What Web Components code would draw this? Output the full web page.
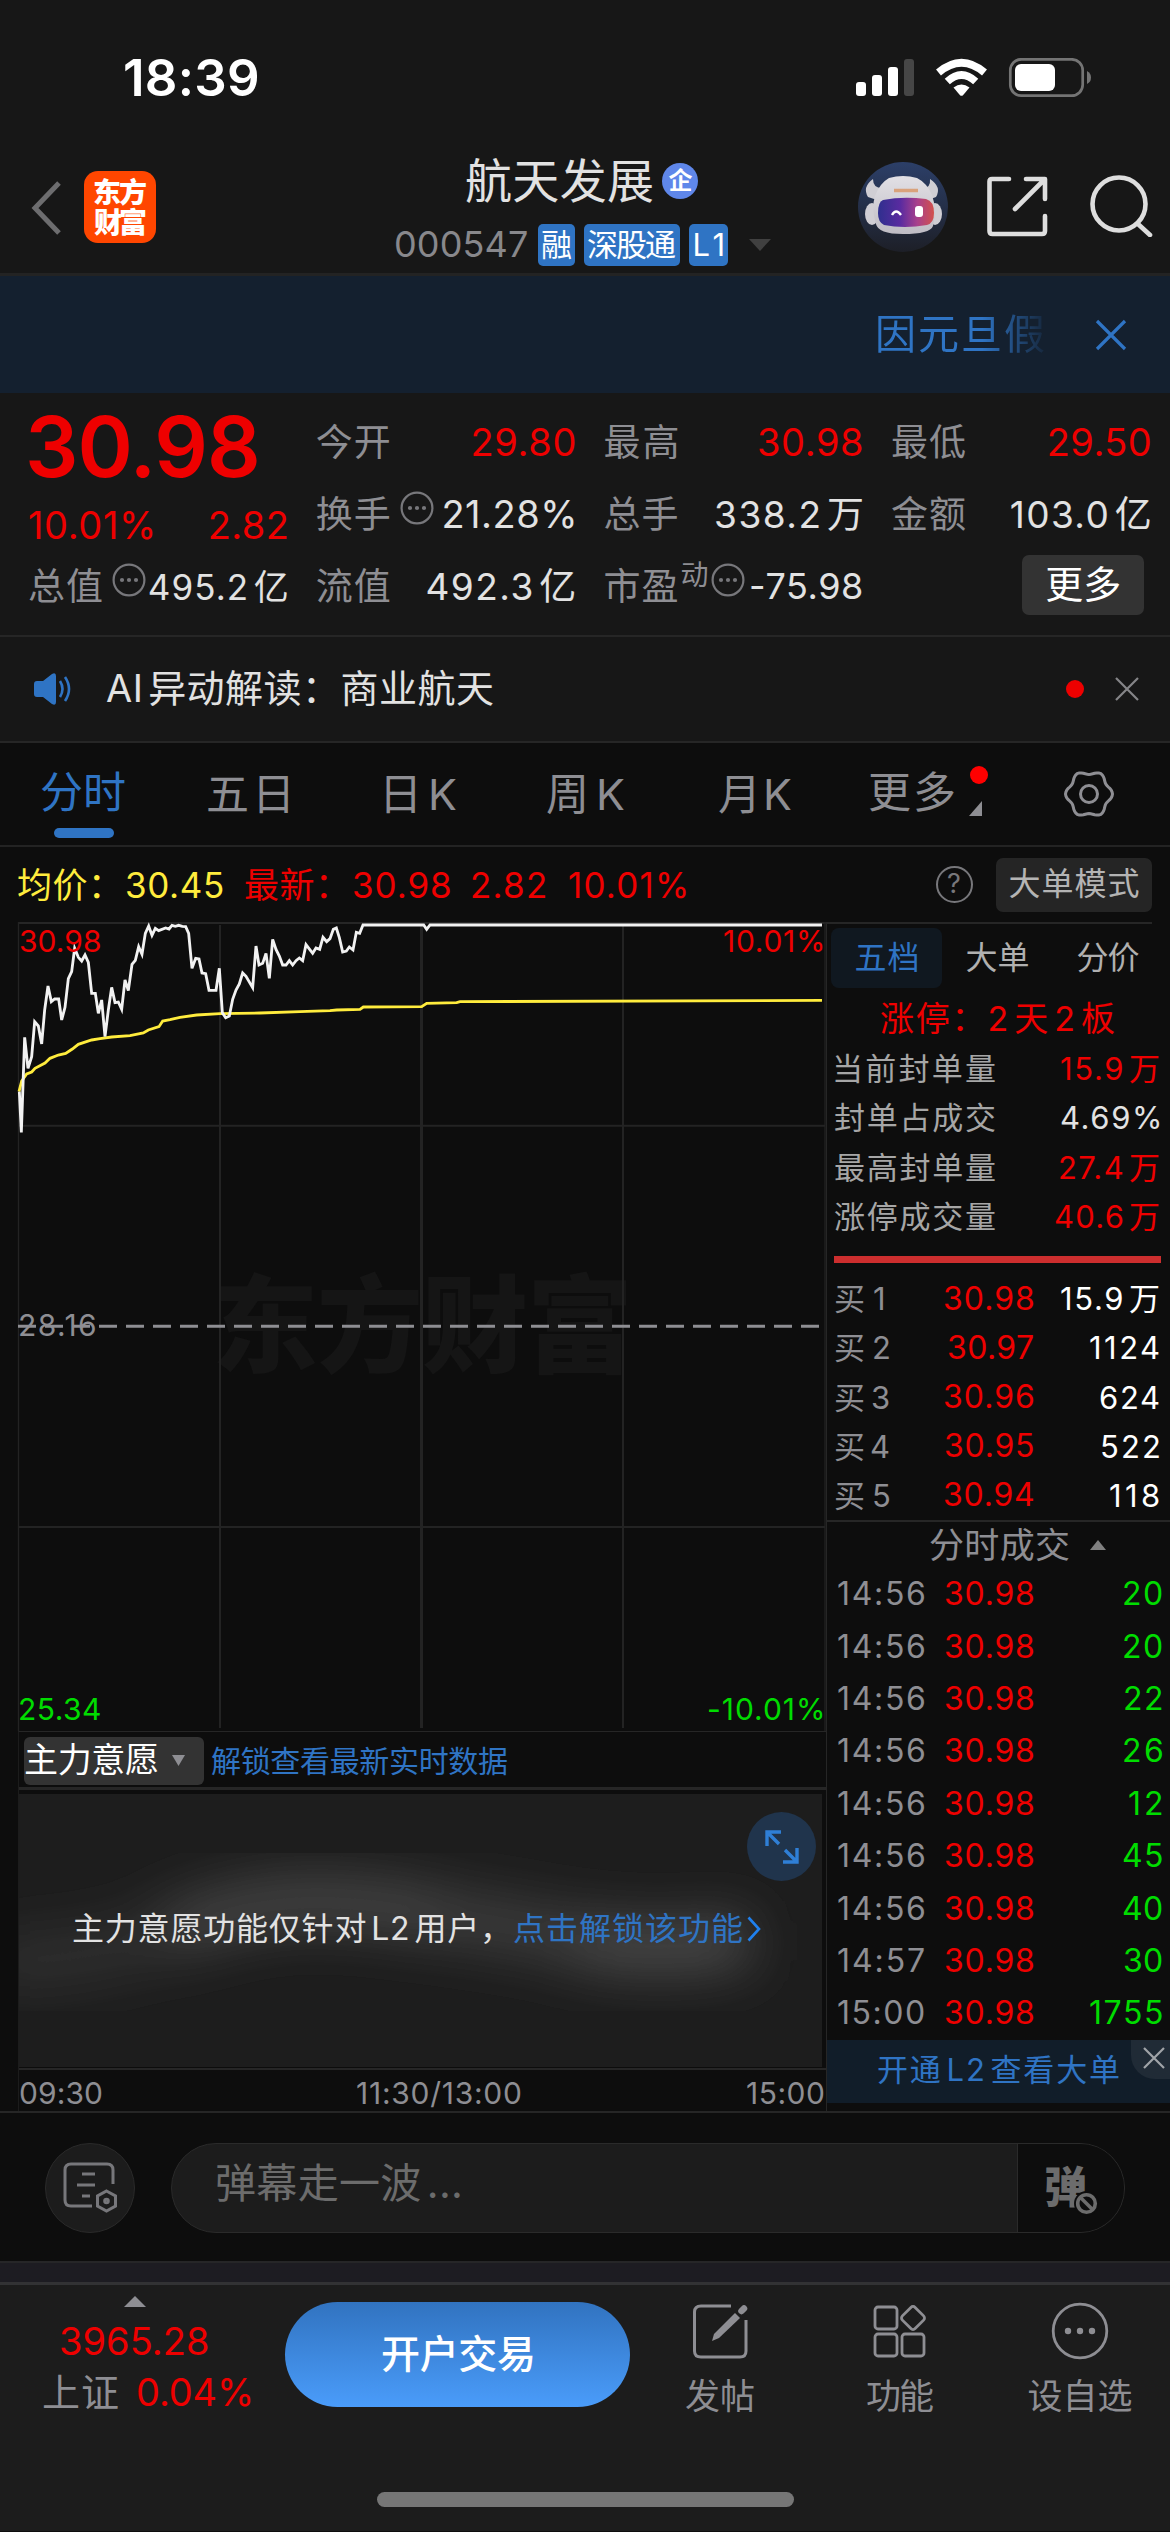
<!DOCTYPE html>
<html lang="zh-CN">
<head>
<meta charset="utf-8">
<title>航天发展 000547</title>
<style>
  :root {
    --red: #ee0000;
    --green: #00dc00;
    --blue: #2f74c4;
    --grey: #8e8e93;
    --light: #e2e2e2;
    --line: #262626;
    --bar: #171717;
    --dark: #0d0d0d;
  }
  body {
    margin: 0;
    width: 1170px;
    height: 2532px;
    overflow: hidden;
    background: var(--dark);
    color: var(--light);
    font-family: Inter, "Noto Sans CJK SC", sans-serif;
  }
</style>
</head>
<body>
<stock-page></stock-page>

<script>
const FONTS = 'Inter, "Noto Sans CJK SC", sans-serif'
const AUTOSPACE = window.CSS.supports('text-autospace', 'normal')
const pen = document.createElement('canvas').getContext('2d')

/**
 * Registers an element whose shadow root is cloned from the given markup.
 *
 * @param {string} name - The tag name.
 * @param {string} html - Styles and markup of the shadow root.
 */
function define (name, html) {
  const template = document.createElement('template')
  template.innerHTML = '<style>* { box-sizing: border-box; } svg { display: block; flex: none; }</style>' + html
  customElements.define(name, class extends HTMLElement {
    constructor () {
      super()
      this.attachShadow({ mode: 'open' })
        .appendChild(template.content.cloneNode(true))
    }
  })
}

/**
 * A single line of text, tracked so that its ink fills exactly w pixels.
 */
customElements.define('fit-text',
  class extends HTMLElement {
    constructor () {
      super()
      this.attachShadow({ mode: 'open' }).innerHTML = `
        <style>
          :host { display: block; flex: none; white-space: nowrap; line-height: 1.2; text-autospace: normal; }
        </style>
        <slot></slot>`
    }

    connectedCallback () {
      const width = Number(this.getAttribute('w'))
      const size = Number(this.getAttribute('size'))
      const weight = this.getAttribute('weight') || '400'
      const text = this.textContent
      pen.font = weight + ' ' + size + 'px ' + FONTS
      const m = pen.measureText(text)
      // Autospace adds an eighth of an em where Han meets Latin
      const joints = text.match(/[\u4e00-\u9fff](?=[A-Z0-9])|[A-Z0-9](?=[\u4e00-\u9fff])/g) || []
      const extra = AUTOSPACE ? joints.length * size / 8 : 0
      const ink = m.actualBoundingBoxLeft + m.actualBoundingBoxRight + extra
      this.style.fontSize = size + 'px'
      this.style.fontWeight = weight
      this.style.width = width + 'px'
      this.style.textIndent = m.actualBoundingBoxLeft + 'px'
      if (text.length > 1) {
        this.style.letterSpacing = (width - ink) / (text.length - 1) + 'px'
      }
    }
  })

/* Small circled dots, used beside some labels */
define('more-dots', `
  <style>:host { display: block; flex: none; width: 34px; height: 34px; }</style>
  <svg width="34" height="34" viewBox="0 0 34 34">
    <circle cx="17" cy="17" r="15.4" fill="none" stroke="#77777b" stroke-width="2.2"/>
    <g fill="#77777b"><circle cx="10" cy="17" r="2.1"/><circle cx="17" cy="17" r="2.1"/><circle cx="24" cy="17" r="2.1"/></g>
  </svg>`)

define('status-bar', `
  <style>
    :host { display: flex; height: 140px; padding: 16px 78px 0 125px; align-items: center; color: #fff; }
    svg { margin-left: auto; }
  </style>
  <fit-text w="133" size="51" weight="600">18:39</fit-text>
  <svg width="236" height="40" viewBox="856 58 236 40" fill="#fff">
    <rect x="856" y="82" width="10" height="14" rx="3"/>
    <rect x="872" y="75" width="10" height="21" rx="3"/>
    <rect x="888" y="67" width="10" height="29" rx="3"/>
    <rect x="904" y="59" width="10" height="37" rx="3" fill="#464646"/>
    <g fill="none" stroke="#fff" stroke-width="7.6">
      <path d="M938.5 72.500Q961.500 53 984.500 72.500"/>
      <path d="M947.300 81.500Q961.500 68.500 975.700 81.500"/>
    </g>
    <path d="M953.500 87.500Q961.500 81.500 969.500 87.500L963 95.200Q961.500 96.500 960 95.200Z"/>
    <rect x="1010.300" y="59.300" width="72.400" height="36.400" rx="11" fill="none" stroke="#747474" stroke-width="2.700"/>
    <rect x="1015" y="64" width="40" height="27" rx="6"/>
    <path d="M1087 71q4 2 4 6.500t-4 6.500z" fill="#747474"/>
  </svg>`)

define('stock-tag', `
  <style>
    :host { display: flex; height: 42px; align-items: center; justify-content: center; background: var(--blue); color: #fff; border-radius: 5px; }
  </style>
  <slot></slot>`)

define('bot-avatar', `
  <style>:host { display: block; width: 90px; height: 90px; }</style>
  <svg width="90" height="90" viewBox="0 0 90 90">
    <defs>
      <linearGradient id="sky" x2="0" y2="1"><stop stop-color="#2c3f68"/><stop offset=".6" stop-color="#232c42"/><stop offset="1" stop-color="#1d1f27"/></linearGradient>
      <linearGradient id="visor"><stop stop-color="#2f2f8e"/><stop offset=".4" stop-color="#5a2ba0"/><stop offset=".7" stop-color="#a8408c"/><stop offset="1" stop-color="#d2504c"/></linearGradient>
      <linearGradient id="shell" x2="0" y2="1"><stop stop-color="#e2e0e5"/><stop offset="1" stop-color="#bfbcc4"/></linearGradient>
    </defs>
    <circle cx="45" cy="45" r="45" fill="url(#sky)"/>
    <g fill="#d0ced4">
      <path d="M15 17Q4 25 10 35L19 38L26 26Q15 27 15 17Z"/>
      <path d="M72 17Q84 25 78 35L70 38L63 26Q73 27 72 17Z"/>
      <ellipse cx="14" cy="52" rx="7" ry="11"/>
      <ellipse cx="77" cy="52" rx="7" ry="11"/>
    </g>
    <path d="M31 16Q45 12 59 16Q69 21 74 33Q79 47 75 64Q72 72 45 72Q20 72 18 62Q13 46 17 34Q22 21 31 16Z" fill="url(#shell)"/>
    <path d="M25 38Q45 34 68 37Q76 39 76 51Q76 61 69 63Q46 67 26 63Q20 60 20 51Q20 40 25 38Z" fill="url(#visor)"/>
    <path d="M36 28.500H60" stroke="#d9a27c" stroke-width="3.500"/>
    <path d="M34 53q4-7 9 0" fill="none" stroke="#fff" stroke-width="2.400"/>
    <rect x="57" y="44" width="8" height="11" rx="3" fill="#fff"/>
  </svg>`)

define('nav-header', `
  <style>
    :host { display: grid; grid-template-columns: 84px 72px 1fr 90px 100px 106px; height: 136px; border-bottom: 3px solid #232323; padding: 0 16px 0 0; align-items: center; }
    .logo { height: 72px; border-radius: 14px; background: #ff4600; color: #fff; padding: 7px 0 0 10px; display: grid; grid-template-rows: 30px 30px; }
    .logo fit-text { line-height: 30px; }
    .middle { height: 100%; }
    .name { display: flex; align-items: center; height: 50px; margin: 16px 0 0 310px; gap: 9px; }
    .ent { width: 36px; height: 36px; border-radius: 50%; background: #5f87ea; color: #fff; display: grid; place-items: center; }
    .codes { display: flex; align-items: center; height: 42px; margin: 18px 0 0 240px; gap: 9px; color: #88888c; }
    .codes fit-text { margin-right: 2px; }
    .codes stock-tag fit-text { margin: 0; }
    .codes svg { margin-left: 12px; }
  </style>
  <svg width="84" height="60"><path d="M59 6L35 31L59 56" fill="none" stroke="#6d6d6f" stroke-width="5"/></svg>
  <div class="logo">
    <fit-text w="52" size="28" weight="800">东方</fit-text>
    <fit-text w="52" size="28" weight="800">财富</fit-text>
  </div>
  <div class="middle">
    <div class="name">
      <fit-text w="187" size="47">航天发展</fit-text>
      <div class="ent"><fit-text w="23" size="24" weight="700">企</fit-text></div>
    </div>
    <div class="codes">
      <fit-text w="131" size="36">000547</fit-text>
      <stock-tag style="width:37px"><fit-text w="29" size="31">融</fit-text></stock-tag>
      <stock-tag style="width:96px"><fit-text w="88" size="31">深股通</fit-text></stock-tag>
      <stock-tag style="width:39px"><fit-text w="28" size="31">L1</fit-text></stock-tag>
      <svg width="22" height="12"><path d="M0 0H22L11 12Z" fill="#404040"/></svg>
    </div>
  </div>
  <bot-avatar></bot-avatar>
  <svg style="margin-left:39px" width="61" height="62" fill="none" stroke="#dedede" stroke-width="4.600" stroke-linecap="round" stroke-linejoin="round"><path d="M22 3H5Q2.500 3 2.500 5.500V55Q2.500 58 5.500 58H55Q58 58 58 55V40M39 3H58V23M57 4L28 33"/></svg>
  <svg style="margin:-4px 0 0 42px" width="64" height="64" fill="none" stroke="#dedede" stroke-width="4.600" stroke-linecap="round"><circle cx="29" cy="31" r="26.500"/><path d="M48 51L60 62"/></svg>`)

define('notice-bar', `
  <style>
    :host { display: flex; height: 117px; background: #14202f; color: var(--blue); align-items: center; padding-right: 43px; justify-content: flex-end; }
    .roll { width: 174px; overflow: hidden; -webkit-mask-image: linear-gradient(90deg, #000 60%, transparent 100%); }
    svg { margin-left: 43px; }
  </style>
  <div class="roll"><fit-text w="166" size="41">因元旦假</fit-text></div>
  <svg width="32" height="32" fill="none" stroke="#2f74c4" stroke-width="3.200"><path d="M2 2L30 30M30 2L2 30"/></svg>`)

define('quote-cell', `
  <style>
    :host { display: flex; height: 100%; align-items: center; color: var(--grey); }
    ::slotted([slot=value]) { margin-left: auto; color: var(--light); }
    ::slotted([slot=value].up) { color: var(--red); }
    ::slotted(more-dots) { margin: -14px 0 0 10px; }
  </style>
  <slot></slot><slot name="value"></slot>`)

define('quote-grid', `
  <style>
    :host { display: grid; height: 244px; padding: 14px 20px 14px 29px; border-bottom: 2px solid #262626; column-gap: 30px; grid-template-columns: repeat(4, 257.700px); grid-template-rows: 72px 72px 72px; align-items: center; }
    .last { color: var(--red); height: 144px; grid-row: span 2; }
    .last > fit-text { line-height: 80px; }
    .diff { display: flex; justify-content: space-between; margin-top: 16px; }
    .btn { justify-self: end; margin: -5px 6px 0 0; width: 122px; height: 60px; border-radius: 7px; background: #333; color: #fff; display: grid; place-items: center; }
  </style>
  <div class="last">
    <fit-text w="228" size="84" weight="600">30.98</fit-text>
    <div class="diff"><fit-text w="124" size="38">10.01%</fit-text><fit-text w="77" size="38">2.82</fit-text></div>
  </div>
  <quote-cell><fit-text w="73" size="37">今开</fit-text><fit-text slot="value" class="up" w="102" size="38">29.80</fit-text></quote-cell>
  <quote-cell><fit-text w="73" size="37">最高</fit-text><fit-text slot="value" class="up" w="103" size="38">30.98</fit-text></quote-cell>
  <quote-cell><fit-text w="73" size="37">最低</fit-text><fit-text slot="value" class="up" w="101" size="38">29.50</fit-text></quote-cell>
  <quote-cell><fit-text w="73" size="37">换手</fit-text><more-dots></more-dots><fit-text slot="value" w="131" size="38">21.28%</fit-text></quote-cell>
  <quote-cell><fit-text w="73" size="37">总手</fit-text><fit-text slot="value" w="146" size="37">338.2万</fit-text></quote-cell>
  <quote-cell><fit-text w="73" size="37">金额</fit-text><fit-text slot="value" w="139" size="37">103.0亿</fit-text></quote-cell>
  <quote-cell><fit-text w="73" size="37">总值</fit-text><more-dots></more-dots><fit-text slot="value" w="137" size="35">495.2亿</fit-text></quote-cell>
  <quote-cell><fit-text w="73" size="37">流值</fit-text><fit-text slot="value" w="147" size="37">492.3亿</fit-text></quote-cell>
  <quote-cell><fit-text w="73" size="37">市盈</fit-text><fit-text style="margin:-22px 0 0 4px" w="27" size="28">动</fit-text><more-dots style="margin-left:3px"></more-dots><fit-text slot="value" w="111" size="36">-75.98</fit-text></quote-cell>
  <div class="btn"><fit-text w="73" size="38">更多</fit-text></div>`)

define('news-bar', `
  <style>
    :host { display: flex; height: 106px; border-bottom: 2px solid #262626; padding: 0 31px 0 34px; align-items: center; }
    fit-text { margin-left: 32px; }
    i { width: 18px; height: 18px; border-radius: 50%; background: var(--red); margin: 0 31px 0 auto; }
  </style>
  <svg width="40" height="34" viewBox="0 0 40 34"><path d="M3 9H9L18 2Q22 0 22 4V30Q22 34 18 32L9 25H3Q0 25 0 22V12Q0 9 3 9Z" fill="#2f74c4"/><path d="M26 9Q31 17 26 25M31 5Q39 17 31 29" fill="none" stroke="#2f74c4" stroke-width="2.600"/></svg>
  <fit-text w="387" size="38">AI异动解读：商业航天</fit-text>
  <i></i>
  <svg width="24" height="24" fill="none" stroke="#858588" stroke-width="2.200"><path d="M1 1L23 23M23 1L1 23"/></svg>`)

/* Period tabs; the gear outline has six soft lobes */
define('period-tabs', `
  <style>
    :host { display: grid; height: 104px; border-bottom: 2px solid #232323; padding-left: 41px; grid-template-columns: 167px 178px 161px 172px 151px 193px 1fr; align-items: center; color: var(--grey); background: var(--dark); }
    :host > * { justify-self: start; }
    .on { color: var(--blue); height: 100%; padding-top: 25px; }
    .on i { display: block; width: 60px; height: 10px; border-radius: 5px; background: var(--blue); margin: 11px 0 0 13px; }
    fit-text { line-height: 49px; }
    .more { display: flex; height: 100%; padding-top: 25px; }
    .more span { margin-left: 16px; }
    .more i { display: block; width: 18px; height: 18px; border-radius: 50%; background: #f00; margin-top: -2px; }
    .more svg { margin: 17px 0 0 -1px; }
  </style>
  <div class="on"><fit-text w="84" size="43">分时</fit-text><i></i></div>
  <fit-text w="80" size="43">五日</fit-text>
  <fit-text w="70" size="43">日K</fit-text>
  <fit-text w="77" size="43">周K</fit-text>
  <fit-text w="72" size="43">月K</fit-text>
  <div class="more"><fit-text w="84" size="43">更多</fit-text><span><i></i><svg width="13" height="15"><path d="M13 0V15H0Z" fill="#8e8e93"/></svg></span></div>
  <svg width="52" height="52" viewBox="-26 -26 52 52" fill="none" stroke="#8e8e93" stroke-width="3"><path id="gear"/><circle r="8.500"/></svg>`)

define('average-bar', `
  <style>
    :host { display: flex; height: 75px; align-items: center; padding: 0 18px; color: var(--red); }
    fit-text + fit-text { margin-left: 22px; }
    .avg { color: #ffec3d; }
    .btn { width: 156px; height: 54px; border-radius: 7px; margin-left: 23px; background: #252525; color: #b4b4b4; display: grid; place-items: center; }
    .q { width: 37px; height: 37px; border: 2.400px solid #77777b; border-radius: 50%; display: grid; place-items: center; color: #77777b; margin-left: auto; }
  </style>
  <fit-text class="avg" w="82" size="35">均价：</fit-text>
  <fit-text class="avg" style="margin-left:27px" w="96" size="35">30.45</fit-text>
  <fit-text w="82" size="35">最新：</fit-text>
  <fit-text style="margin-left:27px" w="96" size="35">30.98</fit-text>
  <fit-text w="73" size="35">2.82</fit-text>
  <fit-text style="margin-left:24px" w="117" size="35">10.01%</fit-text>
  <div class="q"><fit-text w="13" size="27">?</fit-text></div>
  <div class="btn"><fit-text w="129" size="32">大单模式</fit-text></div>`)

/* Both series are plotted on a grid three times finer than the canvas */
const PRICE = '58,575 64,697 74,412 84,505 95,470 104,365 115,378 125,432 134,330 144,258 154,305 164,297 176,297 185,360 195,322 205,236 215,215 224,145 235,172 245,183 255,165 265,187 275,280 286,280 295,340 305,300 315,410 325,330 335,262 345,308 355,306 365,328 375,240 385,272 396,193 406,181 416,140 426,163 436,100 446,78 456,106 466,85 476,92 497,84 507,87 516,76 526,79 536,76 547,79 557,80 566,100 576,205 587,175 597,177 606,219 617,221 627,271 648,271 658,205 667,338 677,353 688,348 698,298 708,270 718,252 728,219 738,229 758,263 768,138 777,195 788,190 798,160 808,235 818,118 828,148 838,168 848,195 858,195 868,182 878,195 888,182 898,174 908,182 918,134 938,160 948,144 959,148 969,112 980,125 990,116 1000,88 1009,84 1018,113 1028,156 1039,153 1048,141 1059,150 1069,97 1079,100 1089,75 1271,75 1280,88 1290,75 2466,75'
const AVERAGE = '57,575 65,543 80,522 95,516 105,505 135,489 150,475 175,465 197,460 217,447 235,433 275,420 300,416 335,411 390,407 430,399 445,390 477,380 488,363 510,359 540,352 590,345 660,341 780,339 900,335 990,332 1010,330 1080,328 1090,321 1265,320 1280,310 1370,308 1380,305 2466,301'

define('trend-chart', `
  <style>
    :host { display: grid; height: 809px; }
    svg, .labels, .mark { grid-area: 1 / 1; }
    .mark { place-self: center; color: #151515; margin: 0 0 2px 18px; }
    .labels { display: grid; grid-template-columns: 1fr auto; align-content: space-between; padding: 1px 3px 4px 20px; color: var(--red); }
    .labels fit-text { line-height: 36px; justify-self: end; }
    .labels fit-text:first-child, .labels .down:nth-child(4) { justify-self: start; }
    .labels .mid { grid-column: span 2; color: var(--grey); justify-self: start; }
    .down { color: var(--green); }
  </style>
  <fit-text class="mark" w="410" size="106" weight="900">东方财富</fit-text>
  <svg width="826" height="809" viewBox="0 922 826 809" fill="none">
    <g stroke="#232323" stroke-width="2">
      <path d="M18.500 922V1731M825 922V1731" stroke-width="1.300"/>
      <path d="M220 925V1728M623 925V1728M18 1125.700H825M18 1527H825"/>
      <path d="M421.500 925V1728" stroke-width="3"/>
    </g>
    <g transform="translate(0 900) scale(.33333)" stroke-width="8.500">
      <polyline stroke="#ffec3d" points="${AVERAGE}"/>
      <polyline stroke="#f2f2f2" points="${PRICE}"/>
    </g>
    <path d="M18 1326.300H822" stroke="#8e8e93" stroke-width="3" stroke-dasharray="18 9"/>
  </svg>
  <div class="labels">
    <fit-text w="80" size="30">30.98</fit-text><fit-text w="99" size="30">10.01%</fit-text>
    <fit-text class="mid" w="75" size="30">28.16</fit-text>
    <fit-text class="down" w="80" size="30">25.34</fit-text><fit-text class="down" w="114" size="30">-10.01%</fit-text>
  </div>`)

define('intent-panel', `
  <style>
    :host { display: block; margin-left: 18px; width: 808px; border-top: 1.500px solid #262626; border-left: 1.500px solid #1c1c1c; }
    .head { display: flex; height: 58px; align-items: center; padding: 2px 0 0 5px; border-bottom: 3px solid #262626; color: var(--blue); }
    .pick { display: flex; align-items: center; width: 180px; height: 48px; background: #333; border-radius: 6px; padding-left: 1px; color: #fff; margin-right: 7px; }
    .pick svg { margin-left: 14px; }
    .body { height: 273px; margin: 4px 4px 1px 0; background: #1d1d1d; overflow: hidden; display: flex; align-items: flex-start; position: relative; }
    .glow { position: absolute; left: 0; top: 0; }
    .msg { position: relative; display: flex; align-items: center; height: 40px; margin: 115px 0 0 54px; }
    .msg .go { color: var(--blue); margin-left: 23px; }
    .expand { position: absolute; left: 728px; top: 18px; width: 69px; height: 69px; border-radius: 50%; background: #20344c; display: grid; place-items: center; }
    .axis { display: grid; grid-template-columns: 337px 1fr auto; border-top: 2px solid #262626; height: 43px; padding: 5px 2px 0 1px; color: var(--grey); }
  </style>
  <div class="head">
    <div class="pick"><fit-text w="133" size="34">主力意愿</fit-text><svg width="13" height="11"><path d="M0 0H13L6.500 11Z" fill="#8e8e93"/></svg></div>
    <fit-text w="296" size="30">解锁查看最新实时数据</fit-text>
  </div>
  <div class="body">
    <svg class="glow" width="803" height="273">
      <defs><filter id="soft" x="-20%" y="-80%" width="140%" height="260%"><feGaussianBlur stdDeviation="27"/></filter></defs>
      <g filter="url(#soft)" fill="none" stroke="#5a5a5a" stroke-width="46">
        <path d="M-30 168Q70 168 150 138" stroke-opacity=".35"/>
        <path d="M150 138Q240 104 310 108T420 122" stroke-opacity=".75"/>
        <path d="M420 122Q500 132 560 146" stroke-opacity=".6"/>
        <path d="M560 146Q630 160 730 146" stroke-opacity=".85"/>
      </g>
    </svg>
    <div class="msg">
      <fit-text w="418" size="32">主力意愿功能仅针对L2用户，</fit-text>
      <fit-text class="go" w="228" size="32">点击解锁该功能</fit-text>
      <svg style="margin-left:5px" width="14" height="26" fill="none" stroke="#1f80ee" stroke-width="2.600"><path d="M1.500 1.500L12 13L1.500 24.500"/></svg>
    </div>
    <div class="expand"><svg width="34" height="34" fill="none" stroke="#2f7fd6" stroke-width="3.400"><path d="M2 16V2H16M2.500 2.500L14 14M18 32H32V18M31.500 31.500L20 20"/></svg></div>
  </div>
  <div class="axis">
    <fit-text w="82" size="30">09:30</fit-text>
    <fit-text w="164" size="30">11:30/13:00</fit-text>
    <fit-text w="77" size="30">15:00</fit-text>
  </div>`)

define('book-row', `
  <style>
    :host { display: grid; grid-template-columns: var(--first, 95px) 103px 1fr; height: var(--row); align-items: center; color: var(--grey); }
    ::slotted(.price) { justify-self: end; color: var(--red); }
    ::slotted(.vol) { justify-self: end; color: var(--vol, #fff); }
  </style>
  <slot></slot>`)

define('fact-row', `
  <style>
    :host { display: flex; height: 49.300px; align-items: center; justify-content: space-between; color: #a6a6a6; }
    ::slotted(.val) { color: var(--red); }
    ::slotted(.plain) { color: var(--light); }
  </style>
  <slot></slot>`)

const bids = [['30.98', 89, '15.9万', 98], ['30.97', 85, '1124', 69], ['30.96', 89, '624', 59], ['30.95', 88, '522', 57], ['30.94', 89, '118', 49]]
const deals = [['14:56', '20', 38], ['14:56', '20', 38], ['14:56', '22', 37], ['14:56', '26', 38], ['14:56', '12', 33], ['14:56', '45', 39], ['14:56', '40', 39], ['14:57', '30', 38], ['15:00', '1755', 72]]

define('order-book', `
  <style>
    :host { display: block; width: 344px; border-left: 1.500px solid #262626; }
    .tabs { display: grid; grid-template-columns: repeat(3, 111px); height: 60px; margin: 6px 0 0 4px; color: #b0b0b0; }
    .tabs div { display: grid; place-items: center; }
    .tabs .on { background: #101820; border-radius: 8px; color: var(--blue); }
    .streak { margin: 9px 0 3px 54px; color: var(--red); line-height: 44px; }
    .facts { padding: 0 11px 0 8px; }
    hr { border: 0; height: 7px; background: #cc2e2e; margin: 15px 9px 11px 7px; }
    .bids { --row: 49.200px; padding: 0 11px 0 8px; height: 246px; }
    .head { display: flex; align-items: center; height: 48px; border-top: 2px solid #262626; padding-left: 103px; color: var(--grey); }
    .head svg { margin-left: 21px; }
    .deals { --row: 52.400px; --vol: var(--green); --first: 92px; padding: 0 8px 0 11px; }
    .l2 { display: flex; justify-content: space-between; height: 63px; background: #111d29; color: var(--blue); padding-left: 51px; }
    .l2 > fit-text { margin-top: 11px; }
    .l2 div { width: 39px; height: 39px; background: #202b36; border-bottom-left-radius: 24px; display: grid; place-items: center; padding: 0 0 3px 6px; }
  </style>
  <div class="tabs">
    <div class="on"><fit-text w="62" size="32">五档</fit-text></div>
    <div><fit-text w="62" size="32">大单</fit-text></div>
    <div><fit-text w="62" size="32">分价</fit-text></div>
  </div>
  <fit-text class="streak" w="233" size="34">涨停：2天2板</fit-text>
  <div class="facts">
    <fact-row><fit-text w="160" size="31">当前封单量</fit-text><fit-text class="val" w="98" size="31">15.9万</fit-text></fact-row>
    <fact-row><fit-text w="160" size="31">封单占成交</fit-text><fit-text class="plain" w="98" size="31">4.69%</fit-text></fact-row>
    <fact-row><fit-text w="160" size="31">最高封单量</fit-text><fit-text class="val" w="99" size="31">27.4万</fit-text></fact-row>
    <fact-row><fit-text w="160" size="31">涨停成交量</fit-text><fit-text class="val" w="104" size="31">40.6万</fit-text></fact-row>
  </div>
  <hr>
  <div class="bids">${bids.map((b, i) => `
    <book-row><fit-text w="${i ? 54 : 48}" size="31">买${i + 1}</fit-text><fit-text class="price" w="${b[1]}" size="32">${b[0]}</fit-text><fit-text class="vol" w="${b[3]}" size="31">${b[2]}</fit-text></book-row>`).join('')}
  </div>
  <div class="head"><fit-text w="139" size="35">分时成交</fit-text><svg width="16" height="10"><path d="M0 10H16L8 0Z" fill="#808080"/></svg></div>
  <div class="deals">${deals.map(d => `
    <book-row><fit-text w="86" size="32">${d[0]}</fit-text><fit-text class="price" w="88" size="32">30.98</fit-text><fit-text class="vol" w="${d[2]}" size="32">${d[1]}</fit-text></book-row>`).join('')}
  </div>
  <div class="l2">
    <fit-text w="241" size="31">开通L2查看大单</fit-text>
    <div><svg width="22" height="22" fill="none" stroke="#a0a4a8" stroke-width="2.200"><path d="M1 1L21 21M21 1L1 21"/></svg></div>
  </div>`)

define('danmaku-bar', `
  <style>
    :host { display: flex; height: 150px; border-top: 2px solid #262626; align-items: center; padding: 2px 45px 0; gap: 36px; }
    .set { width: 90px; height: 90px; border: 1.500px solid #2a2a2a; border-radius: 50%; background: #1c1c1c; display: grid; place-items: center; flex: none; }
    .input { display: flex; flex: 1; height: 90px; border: 1.500px solid #2a2a2a; border-radius: 45px; background: #1c1c1c; overflow: hidden; color: #6c6c6c; }
    .input > fit-text { margin: 15px 0 0 45px; }
    .off { margin-left: auto; width: 107px; border-left: 1.500px solid #2a2a2a; background: var(--dark); padding: 20px 0 0 28px; display: flex; }
    .off fit-text { line-height: 46px; }
    .off svg { margin: 27px 0 0 -12px; }
  </style>
  <div class="set"><svg width="56" height="52" fill="none" stroke="#77777b" stroke-width="3"><path d="M30 44H9Q3 44 3 38V8Q3 2 9 2H45Q51 2 51 8V22M20 12H33M15 23H33M20 34H28"/><path d="M44.500 29L53.500 34V44L44.500 49L35.500 44V34Z"/><circle cx="44.500" cy="39" r="1.800"/></svg></div>
  <div class="input">
    <fit-text w="238" size="41">弹幕走一波...</fit-text>
    <div class="off"><fit-text w="40" size="43" weight="900">弹</fit-text><svg width="25" height="25"><circle cx="12.500" cy="12.500" r="12.500" fill="#0d0d0d"/><g fill="none" stroke="#6c6c6c" stroke-width="3.600"><circle cx="12.500" cy="12.500" r="8.800"/><path d="M6.500 6.500L18.500 18.500"/></g></svg></div>
  </div>`)

define('tool-item', `
  <style>
    :host { display: grid; justify-items: center; align-content: start; grid-template-rows: 58px 48px; padding-top: 17px; color: var(--grey); align-items: center; row-gap: 12px; }
  </style>
  <slot></slot>`)

define('bottom-bar', `
  <style>
    :host { display: block; height: 270px; background: #1c1c1c; }
    .strip { height: 24px; background: #1d1c22; border-top: 2px solid #262628; border-bottom: 3px solid #323234; }
    .row { display: grid; grid-template-columns: 285px 345px 180px 180px 180px; height: 140px; }
    .index { color: var(--red); display: grid; grid-template-rows: 10px 46px 46px; row-gap: 6.500px; padding-top: 11px; padding-right: 16px; justify-items: center; }
    .index > fit-text { margin-top: 6px; }
    .index p { margin: 9px 0 0; display: flex; gap: 20px; align-items: center; padding-left: 25px; }
    .index span { color: var(--grey); }
    .open { height: 105px; margin-top: 17px; border-radius: 53px; background: linear-gradient(#3173c0, #4a9cfa); color: #fff; display: grid; place-items: center; }
    .home { width: 417px; height: 15px; border-radius: 8px; background: #767676; margin: 67px 0 0 377px; }
  </style>
  <div class="strip"></div>
  <div class="row">
    <div class="index">
      <svg width="22" height="11"><path d="M11 0L22 11H0Z" fill="#8e8e93"/></svg>
      <fit-text w="147" size="38">3965.28</fit-text>
      <p><span><fit-text w="75" size="38">上证</fit-text></span><fit-text w="113" size="38">0.04%</fit-text></p>
    </div>
    <div class="open"><fit-text w="151" size="39" weight="500">开户交易</fit-text></div>
    <tool-item>
      <svg width="56" height="56" fill="none" stroke="#8e8e93" stroke-width="3"><path d="M39 3H9Q2.500 3 2.500 9V48Q2.500 54 9 54H48Q54 54 54 48V17"/><path d="M20 38L22 31L43 10L48 15L27 35Z" fill="#8e8e93" stroke="none"/><path d="M49.500 8L52 5.500" stroke-width="6.500" stroke-linecap="round"/></svg>
      <fit-text w="68" size="35">发帖</fit-text>
    </tool-item>
    <tool-item>
      <svg width="56" height="56" fill="none" stroke="#8e8e93" stroke-width="2.800"><rect x="3" y="4" width="22" height="22" rx="3"/><rect x="3" y="31" width="22" height="22" rx="3"/><rect x="30" y="31" width="22" height="22" rx="3"/><rect x="32" y="6" width="18" height="18" rx="3" transform="rotate(45 41 15)"/></svg>
      <fit-text w="66" size="35">功能</fit-text>
    </tool-item>
    <tool-item>
      <svg width="58" height="58"><circle cx="29" cy="29" r="26.800" fill="none" stroke="#8e8e93" stroke-width="2.800"/><g fill="#8e8e93"><circle cx="17" cy="29" r="3.200"/><circle cx="29" cy="29" r="3.200"/><circle cx="41" cy="29" r="3.200"/></g></svg>
      <fit-text w="103" size="35">设自选</fit-text>
    </tool-item>
  </div>
  <div class="home"></div>`)

define('stock-page', `
  <style>
    :host { display: block; }
    .top { background: var(--bar); }
    .main { display: flex; }
    .left { width: 826px; }
    .rule { height: 1.500px; width: 1134px; margin-left: 18px; background: #262626; margin-bottom: -1.500px; }
  </style>
  <div class="top">
    <status-bar></status-bar>
    <nav-header></nav-header>
    <notice-bar></notice-bar>
    <quote-grid></quote-grid>
    <news-bar></news-bar>
  </div>
  <period-tabs></period-tabs>
  <average-bar></average-bar>
  <div class="rule"></div>
  <div class="main">
    <div class="left">
      <trend-chart></trend-chart>
      <intent-panel></intent-panel>
    </div>
    <order-book></order-book>
  </div>
  <danmaku-bar></danmaku-bar>
  <bottom-bar></bottom-bar>`)

// Trace the gear outline
const tabs = document.querySelector('stock-page').shadowRoot.querySelector('period-tabs')
let gear = ''
for (let a = 0; a < 360; a += 5) {
  const t = a * Math.PI / 180
  const r = 21.5 + 2 * Math.cos(6 * t)
  gear += (a ? 'L' : 'M') + (r * Math.cos(t)).toFixed(1) + ' ' + (r * Math.sin(t)).toFixed(1)
}
tabs.shadowRoot.querySelector('#gear').setAttribute('d', gear + 'Z')
</script>
</body>
</html>
